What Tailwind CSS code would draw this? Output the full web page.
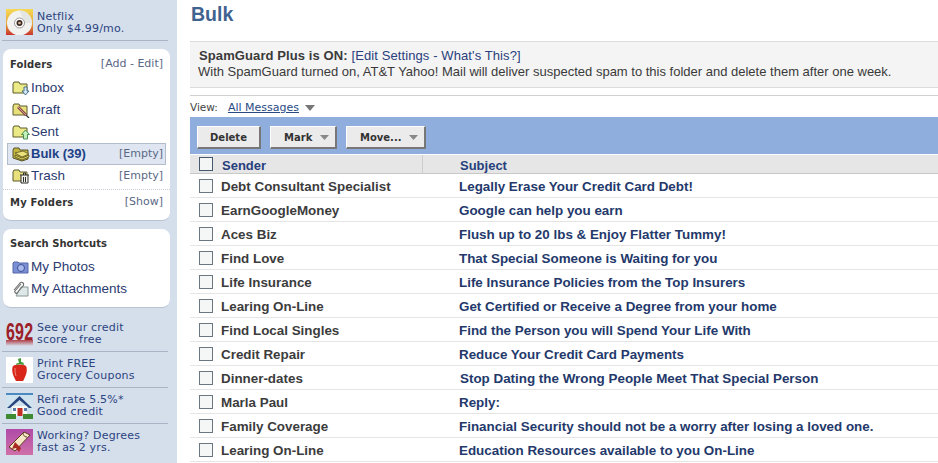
<!DOCTYPE html>
<html lang="en">
<head>
<meta charset="UTF-8">
<title>Bulk</title>
<script src="https://cdn.jsdelivr.net/npm/@tailwindcss/browser@4"></script>
</head>
<body class="w-[938px] h-[463px] overflow-hidden bg-white font-['Liberation_Sans',Arial,sans-serif] flex">

<!-- Sidebar -->
<div class="w-[177px] h-[463px] shrink-0 bg-[#d5deeb] overflow-hidden font-['DejaVu_Sans',sans-serif]">
    <div class="h-[41px] ml-[2px] mr-[9px] border-b border-[#a9b5c4] flex items-start pl-[4px] pt-[9px] gap-[4px]">
        <svg width="27" height="26" viewBox="0 0 27 26" class="shrink-0"><defs><linearGradient id="nf" x1="0" y1="0" x2="0" y2="1"><stop offset="0" stop-color="#f5d955"/><stop offset=".55" stop-color="#e8a83c"/><stop offset="1" stop-color="#c9352d"/></linearGradient></defs><rect width="27" height="26" fill="url(#nf)"/><circle cx="13.5" cy="14" r="12.5" fill="#f2f2f0"/><path d="M13.5 1.5a12.500 12.500 0 0 1 12.500 12.500h-7z" fill="#e4e6e4"/><circle cx="13.500" cy="14" r="5" fill="#fff" stroke="#999"/><circle cx="13.500" cy="14" r="3" fill="#3a2a22"/><circle cx="13.500" cy="14" r="1.300" fill="#d9b8a0"/></svg>
        <div class="text-[11px] leading-[12px] tracking-[0.2px] text-[#2b4480] pt-[2px]">Netflix<br>Only $4.99/mo.</div>
    </div>

    <!-- Folders -->
    <div class="ml-[3px] mr-[7px] mt-[8px] h-[172px] bg-white rounded-[8px] border-b border-[#b8c2d0]">
        <div class="flex justify-between items-center pl-[7px] pr-[7px] pt-[4px] h-[26px] text-[11px]">
            <b class="text-[10px] tracking-[0.1px] text-[#333]">Folders</b><span class="text-[#5a6884]">[Add - Edit]</span>
        </div>
        <div class="mt-[2px] font-['Liberation_Sans',sans-serif] text-[13.5px] text-[#2b3a70]">
            <div class="h-[22px] flex items-center pl-[9px]"><svg width="19" height="16" viewBox="0 0 19 16" class="shrink-0"><path d="M1 4l1-2h5l1 2h7v9H1z" fill="#ecea86" stroke="#5c5a2c"/><path d="M12 7h3v4h2l-3.500 4-3.500-4h2z" fill="#cfe4f4" stroke="#2d5a7c" stroke-width=".8"/></svg>Inbox</div>
            <div class="h-[22px] flex items-center pl-[9px]"><svg width="19" height="16" viewBox="0 0 19 16" class="shrink-0"><path d="M1 4l1-2h5l1 2h7v9H1z" fill="#e8e07c" stroke="#5c5a2c"/><path d="M6 5l8 8" stroke="#8a4a4a" stroke-width="2.600"/><path d="M6 5l8 8" stroke="#e8b0a0" stroke-width=".8"/><path d="M14 13l3 3" stroke="#333" stroke-width="1.200"/></svg>Draft</div>
            <div class="h-[22px] flex items-center pl-[9px]"><svg width="19" height="16" viewBox="0 0 19 16" class="shrink-0"><path d="M1 4l1-2h5l1 2h7v9H1z" fill="#ecea86" stroke="#5c5a2c"/><path d="M13.500 6l4 4.500h-2V15h-4v-4.500h-2z" fill="#c2f0bc" stroke="#2c7a3a" stroke-width=".8"/></svg>Sent</div>
            <div class="mx-[4px] h-[22px] flex items-center pl-[4px] bg-[#dfe6f1] border border-[#b3bccb] text-[13px] font-bold text-[#1d3f86]"><svg width="19" height="16" viewBox="0 0 19 16" class="shrink-0"><path d="M1 4l1-2h5l1 2h8v9l-6 2-9-3z" fill="#c4b53e" stroke="#55522a"/><path d="M3 7l8-2 6 3-7 3z" fill="#ece27c" stroke="#5c5524" stroke-width=".8"/><path d="M3 9l7 3 7-3v2l-7 3-7-3z" fill="#d8cc58" stroke="#5c5524" stroke-width=".8"/></svg><span>Bulk (39)</span><span class="ml-auto mr-[2px] font-['DejaVu_Sans',sans-serif] font-normal text-[11px] text-[#5a6884]">[Empty]</span></div>
            <div class="h-[22px] flex items-center pl-[9px]"><svg width="19" height="16" viewBox="0 0 19 16" class="shrink-0"><path d="M1 4l1-2h5l1 2h7v9H1z" fill="#e8e07c" stroke="#5c5a2c"/><path d="M8 7h9M9 7v8h7V7M11.500 7V5h2v2M11.500 9v5M13.500 9v5" fill="#f2f2ea" stroke="#2c2c2c"/></svg>Trash<span class="ml-auto mr-[7px] font-['DejaVu_Sans',sans-serif] text-[11px] text-[#5a6884]">[Empty]</span></div>
        </div>
        <div class="mt-[2px] border-t border-dotted border-[#c4c9d2] flex justify-between items-center px-[7px] h-[26px] text-[11px]">
            <b class="text-[10px] tracking-[0.2px] text-[#333]">My Folders</b><span class="text-[#5a6884]">[Show]</span>
        </div>
    </div>

    <!-- Search shortcuts -->
    <div class="ml-[3px] mr-[7px] mt-[8px] h-[79px] bg-white rounded-[8px] border-b border-[#b8c2d0]">
        <div class="px-[7px] pt-[7px] h-[25px] text-[10px] font-bold text-[#333]">Search Shortcuts</div>
        <div class="mt-[2px] font-['Liberation_Sans',sans-serif] text-[13.5px] text-[#2b3a70]">
            <div class="h-[22px] flex items-center pl-[9px] gap-[2px]"><svg width="17" height="14" viewBox="0 0 17 14" class="shrink-0"><path d="M1 3l1-1h4l1 1h9v10H1z" fill="#7b90d4" stroke="#5566a8"/><circle cx="9" cy="8" r="3.500" fill="#a9bbee" stroke="#3b4f94"/></svg>My Photos</div>
            <div class="h-[22px] flex items-center pl-[9px] gap-[2px]"><svg width="17" height="17" viewBox="0 0 17 17" class="shrink-0"><path d="M9 6h7v9H4z" fill="#dfe8e8" stroke="#8a9696"/><path d="M2 9l6-7c2-2 5 1 3 3l-6 7c-1 1-3-1-2-2l6-7" fill="none" stroke="#6a6a6a" stroke-width="1.100"/></svg>My Attachments</div>
        </div>
    </div>

    <!-- Ads -->
    <div class="ml-[2px] mr-[9px] mt-[8px] text-[11px] leading-[12px] tracking-[0.2px] text-[#2b4480]">
        <div class="h-[36px] flex items-center pl-[4px] gap-[4px] border-b border-[#a9b5c4]"><svg width="27" height="27" viewBox="0 0 27 27" class="shrink-0"><defs><linearGradient id="sc" x1="0" y1="0" x2="0" y2="1"><stop offset="0" stop-color="#b04048"/><stop offset="1" stop-color="#d5deeb"/></linearGradient></defs><rect y="20" width="27" height="6" fill="url(#sc)"/><text transform="translate(0 20) scale(1 1.500)" font-family="Liberation Sans" font-size="16" font-weight="700" fill="#9c2028">692</text></svg><div>See your credit<br>score - free</div></div>
        <div class="h-[36px] flex items-center pl-[4px] gap-[4px] border-b border-[#a9b5c4]"><svg width="27" height="26" viewBox="0 0 27 26" class="shrink-0"><rect width="27" height="26" fill="#fff"/><path d="M7 9c3-2 10-2 13 0 2 4 0 10-3 15h-7C7 19 5 13 7 9z" fill="#d8261a"/><path d="M10 8c0-2 2-2 3-2l-1-4 3-1 0 4c2 0 3 1 3 3l-4-1z" fill="#3e9a3a"/><path d="M9 11c0 3 0 5 1 8" stroke="#f08878" fill="none"/></svg><div>Print FREE<br>Grocery Coupons</div></div>
        <div class="h-[36px] flex items-center pl-[4px] gap-[4px] border-b border-[#a9b5c4]"><svg width="27" height="26" viewBox="0 0 27 26" class="shrink-0"><rect width="27" height="26" fill="#cfe2ee"/><path d="M0 0h27v2H0z" fill="#4a8ac0"/><path d="M6 13h15v10H6z" fill="#fbfbf6"/><path d="M1 15L13.500 3 26 15h-3L13.500 7 4 15z" fill="#27457e"/><rect x="11.500" y="15" width="5" height="8" fill="#c42f25"/><rect x="7" y="15" width="3" height="3" fill="#5a7ab0"/><rect x="18" y="15" width="3" height="3" fill="#5a7ab0"/><path d="M0 21h10v5H0zM17 21h10v5H17z" fill="#3f8a32"/></svg><div>Refi rate 5.5%*<br>Good credit</div></div>
        <div class="h-[36px] flex items-center pl-[4px] gap-[4px]"><svg width="27" height="26" viewBox="0 0 27 26" class="shrink-0"><defs><linearGradient id="dg" x1="0" y1="0" x2="0" y2="1"><stop offset="0" stop-color="#b04aa8"/><stop offset="1" stop-color="#d070a8"/></linearGradient></defs><rect width="27" height="26" fill="url(#dg)"/><path d="M3 18L18 3l6 3L9 22z" fill="#f6e8c6" stroke="#5c3a22"/><path d="M18 3c-2 2 0 5 3 5" fill="none" stroke="#5c3a22"/><path d="M9 13l6 6-2 4-3-4-4 1z" fill="#a82a22"/></svg><div>Working? Degrees<br>fast as 2 yrs.</div></div>
    </div>
</div>

<!-- Main -->
<div class="flex-1 pl-[13px] overflow-hidden">
    <h1 class="text-[19.5px] leading-[23px] pt-[3px] pl-[1px] h-[41px] font-bold text-[#3f6290]">Bulk</h1>
    <div class="h-[47px] border-t border-b border-[#dcdcdc] bg-[#f4f4f4] pl-[8px] pt-[6px] text-[13px] leading-[16px] text-[#3a3a3a] whitespace-nowrap">
        <div class="pl-[1px] tracking-[0.1px]"><b>SpamGuard Plus is ON:</b> <span class="text-[#2a3f7c]">[Edit Settings - What's This?]</span></div>
        <div>With SpamGuard turned on, AT&amp;T Yahoo! Mail will deliver suspected spam to this folder and delete them after one week.</div>
    </div>
    <div class="mt-[7px] border-t border-[#d0d0d0] h-[22px] pt-[3px] flex items-center font-['DejaVu_Sans',sans-serif] text-[11px] text-[#444]">
        <span class="text-[10.5px]">View:</span><span class="ml-[10px] text-[#2a4a84] underline">All Messages</span>
        <svg width="10" height="6" viewBox="0 0 10 6" class="ml-[6px]"><path d="M0 0h10L5 6z" fill="#777"/></svg>
    </div>
    <div class="h-[37px] bg-[#90aedd] flex items-center gap-[9px] pl-[7px] pt-[3px] font-['DejaVu_Sans',sans-serif] text-[10px] font-bold text-[#333]">
        <div class="h-[23px] w-[64px] pt-[1px] bg-[#ebebeb] border-r-2 border-b-2 border-[#777] border-t border-l border-t-white border-l-white flex items-center justify-center">Delete</div>
        <div class="h-[23px] w-[67px] pt-[1px] bg-[#ebebeb] border-r-2 border-b-2 border-[#777] border-t border-l border-t-white border-l-white flex items-center pl-[13px]">Mark<svg width="9" height="5" viewBox="0 0 9 5" class="ml-auto mr-[6px]"><path d="M0 0h9L4.500 5z" fill="#888"/></svg></div>
        <div class="h-[23px] w-[80px] pt-[1px] bg-[#ebebeb] border-r-2 border-b-2 border-[#777] border-t border-l border-t-white border-l-white flex items-center pl-[13px]">Move...<svg width="9" height="5" viewBox="0 0 9 5" class="ml-auto mr-[6px]"><path d="M0 0h9L4.500 5z" fill="#888"/></svg></div>
    </div>
    <div class="h-[20px] bg-[#e6e6e6] flex items-center text-[13px] font-bold text-[#27407c] border-t border-white border-b border-b-[#c8c8c8]">
        <span class="w-[14px] h-[14px] ml-[9px] border border-[#46586e] bg-[#f4f6f6] shrink-0"></span>
        <span class="w-[201px] ml-[9px] pt-[3px] border-r border-[#cccccc] h-full flex items-center">Sender</span>
        <span class="ml-[37px] pt-[3px]">Subject</span>
    </div>
    <div class="text-[13.4px] font-bold">
        <div class="h-[24px] flex items-center border-b border-[#e4e4e4]"><span class="w-[14px] h-[14px] ml-[9px] border border-[#6a7680] bg-[#f5f6f6] shrink-0"></span><span class="w-[238px] ml-[8px] pt-[3px] text-[#3c3c3c]">Debt Consultant Specialist</span><span class="pt-[3px] text-[#24396b]">Legally Erase Your Credit Card Debt!</span></div>
        <div class="h-[24px] flex items-center border-b border-[#e4e4e4]"><span class="w-[14px] h-[14px] ml-[9px] border border-[#6a7680] bg-[#f5f6f6] shrink-0"></span><span class="w-[238px] ml-[8px] pt-[3px] text-[#3c3c3c]">EarnGoogleMoney</span><span class="pt-[3px] text-[#24396b]">Google can help you earn</span></div>
        <div class="h-[24px] flex items-center border-b border-[#e4e4e4]"><span class="w-[14px] h-[14px] ml-[9px] border border-[#6a7680] bg-[#f5f6f6] shrink-0"></span><span class="w-[238px] ml-[8px] pt-[3px] text-[#3c3c3c]">Aces Biz</span><span class="pt-[3px] text-[#24396b]">Flush up to 20 lbs &amp; Enjoy Flatter Tummy!</span></div>
        <div class="h-[24px] flex items-center border-b border-[#e4e4e4]"><span class="w-[14px] h-[14px] ml-[9px] border border-[#6a7680] bg-[#f5f6f6] shrink-0"></span><span class="w-[238px] ml-[8px] pt-[3px] text-[#3c3c3c]">Find Love</span><span class="pt-[3px] text-[#24396b]">That Special Someone is Waiting for you</span></div>
        <div class="h-[24px] flex items-center border-b border-[#e4e4e4]"><span class="w-[14px] h-[14px] ml-[9px] border border-[#6a7680] bg-[#f5f6f6] shrink-0"></span><span class="w-[238px] ml-[8px] pt-[3px] text-[#3c3c3c]">Life Insurance</span><span class="pt-[3px] text-[#24396b]">Life Insurance Policies from the Top Insurers</span></div>
        <div class="h-[24px] flex items-center border-b border-[#e4e4e4]"><span class="w-[14px] h-[14px] ml-[9px] border border-[#6a7680] bg-[#f5f6f6] shrink-0"></span><span class="w-[238px] ml-[8px] pt-[3px] text-[#3c3c3c]">Learing On-Line</span><span class="pt-[3px] text-[#24396b]">Get Certified or Receive a Degree from your home</span></div>
        <div class="h-[24px] flex items-center border-b border-[#e4e4e4]"><span class="w-[14px] h-[14px] ml-[9px] border border-[#6a7680] bg-[#f5f6f6] shrink-0"></span><span class="w-[238px] ml-[8px] pt-[3px] text-[#3c3c3c]">Find Local Singles</span><span class="pt-[3px] text-[#24396b]">Find the Person you will Spend Your Life With</span></div>
        <div class="h-[24px] flex items-center border-b border-[#e4e4e4]"><span class="w-[14px] h-[14px] ml-[9px] border border-[#6a7680] bg-[#f5f6f6] shrink-0"></span><span class="w-[238px] ml-[8px] pt-[3px] text-[#3c3c3c]">Credit Repair</span><span class="pt-[3px] text-[#24396b]">Reduce Your Credit Card Payments</span></div>
        <div class="h-[24px] flex items-center border-b border-[#e4e4e4]"><span class="w-[14px] h-[14px] ml-[9px] border border-[#6a7680] bg-[#f5f6f6] shrink-0"></span><span class="w-[239px] ml-[8px] pt-[3px] text-[#3c3c3c]">Dinner-dates</span><span class="pt-[3px] text-[#24396b]">Stop Dating the Wrong People Meet That Special Person</span></div>
        <div class="h-[24px] flex items-center border-b border-[#e4e4e4]"><span class="w-[14px] h-[14px] ml-[9px] border border-[#6a7680] bg-[#f5f6f6] shrink-0"></span><span class="w-[238px] ml-[8px] pt-[3px] text-[#3c3c3c]">Marla Paul</span><span class="pt-[3px] text-[#24396b]">Reply:</span></div>
        <div class="h-[24px] flex items-center border-b border-[#e4e4e4]"><span class="w-[14px] h-[14px] ml-[9px] border border-[#6a7680] bg-[#f5f6f6] shrink-0"></span><span class="w-[238px] ml-[8px] pt-[3px] text-[#3c3c3c]">Family Coverage</span><span class="pt-[3px] text-[#24396b]">Financial Security should not be a worry after losing a loved one.</span></div>
        <div class="h-[24px] flex items-center border-b border-[#e4e4e4]"><span class="w-[14px] h-[14px] ml-[9px] border border-[#6a7680] bg-[#f5f6f6] shrink-0"></span><span class="w-[238px] ml-[8px] pt-[3px] text-[#3c3c3c]">Learing On-Line</span><span class="pt-[3px] text-[#24396b]">Education Resources available to you On-Line</span></div>
    </div>
</div>

</body>
</html>
